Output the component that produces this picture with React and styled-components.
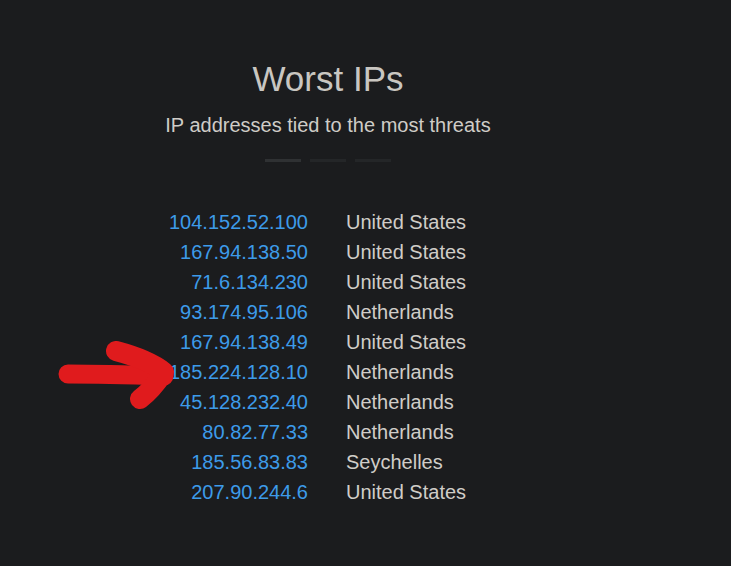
import React from 'react';
import styled, { createGlobalStyle } from 'styled-components';

const rows = [
	['104.152.52.100', 'United States'],
	['167.94.138.50', 'United States'],
	['71.6.134.230', 'United States'],
	['93.174.95.106', 'Netherlands'],
	['167.94.138.49', 'United States'],
	['185.224.128.10', 'Netherlands'],
	['45.128.232.40', 'Netherlands'],
	['80.82.77.33', 'Netherlands'],
	['185.56.83.83', 'Seychelles'],
	['207.90.244.6', 'United States'],
];

const GlobalStyle = createGlobalStyle`
	html, body {
		margin: 0;
		background: #1b1c1e;
	}
	body {
		font-family: 'Liberation Sans', Arial, sans-serif;
		height: 566px;
		overflow: hidden;
	}
`;

function App() {
	return (
		<>
			<GlobalStyle />
			<Page>
				<Section>
					<Title>Worst IPs</Title>
					<Subtitle>IP addresses tied to the most threats</Subtitle>
					<Dashes>
						<Dash active />
						<Dash />
						<Dash />
					</Dashes>
					<Table>
						{rows.map(([ip, country]) => (
							<Row key={ip}>
								<Ip>{ip}</Ip>
								<Country>{country}</Country>
							</Row>
						))}
					</Table>
				</Section>
				{/* hand-drawn marker pointing at the row */}
				<Arrow viewBox='0 0 130 70' width='130' height='70'>
					<path
						d='M10 33 C40 33 76 34 106 35'
						stroke='#e01b1d'
						strokeWidth='19'
						strokeLinecap='round'
						fill='none'
					/>
					<path
						d='M58 10 C77 15 96 23 106 31 C98 43 90 52 82 58'
						stroke='#e01b1d'
						strokeWidth='20'
						strokeLinecap='round'
						strokeLinejoin='round'
						fill='none'
					/>
				</Arrow>
			</Page>
		</>
	);
}

const Page = styled.div`
	position: relative;
	width: 731px;
	height: 566px;
	background: #1b1c1e;
`;

const Section = styled.div`
	width: 656px;
	padding-top: 57px;
	display: flex;
	flex-direction: column;
	align-items: center;
`;

const Title = styled.h1`
	margin: 0;
	font-size: 35px;
	font-weight: 400;
	color: #c9c6c1;
	line-height: 44px;
`;

const Subtitle = styled.p`
	margin: 11px 0 0;
	font-size: 20px;
	color: #cfccc7;
	line-height: 26px;
`;

const Dashes = styled.div`
	display: flex;
	gap: 9px;
	margin-top: 21px;
`;

const Dash = styled.span`
	width: 36px;
	height: 3px;
	background: ${(p) => (p.active ? '#2f3133' : '#242628')};
`;

const Table = styled.div`
	display: grid;
	grid-template-columns: 140px auto;
	column-gap: 38px;
	margin-top: 45px;
	align-self: flex-start;
	margin-left: 168px;
`;

const Row = styled.div`
	display: contents;
`;

const Ip = styled.span`
	text-align: right;
	font-size: 20px;
	line-height: 30px;
	color: #3d9be9;
`;

const Country = styled.span`
	font-size: 20px;
	line-height: 30px;
	color: #d0cdc8;
`;

const Arrow = styled.svg`
	position: absolute;
	left: 58px;
	top: 341px;
`;

export default App;
